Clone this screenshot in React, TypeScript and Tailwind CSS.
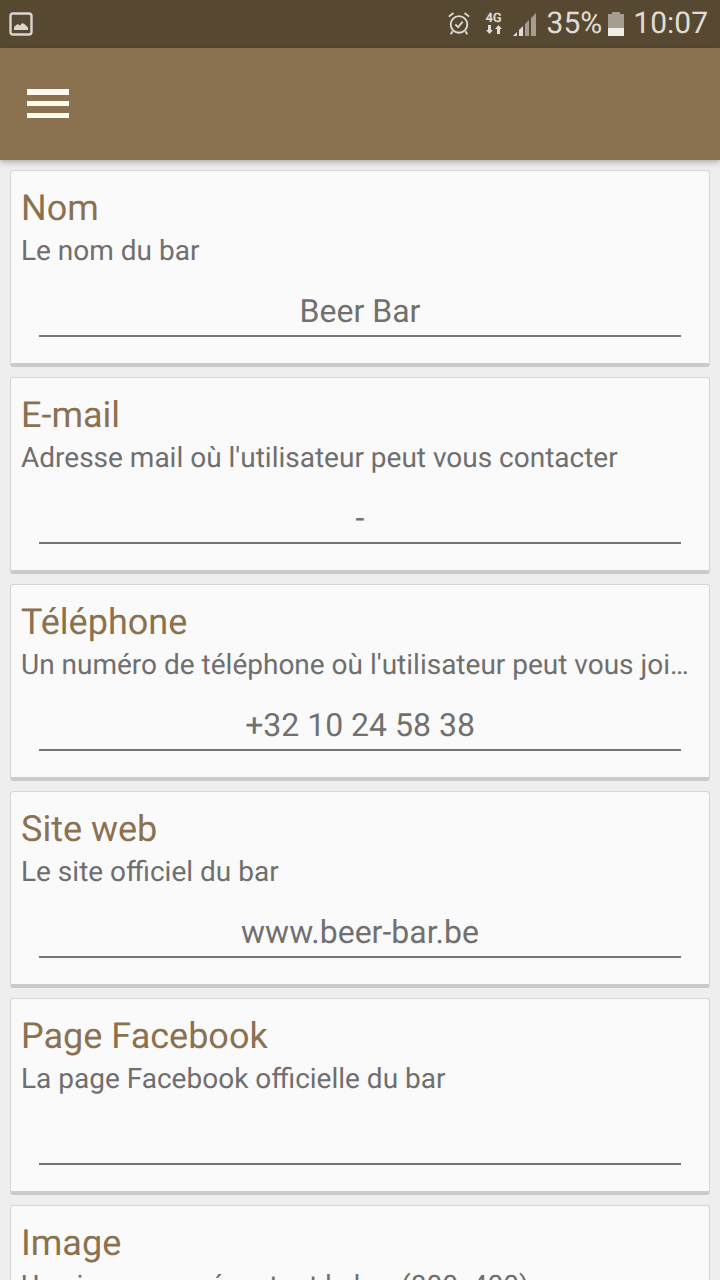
const fields = [
  { title: "Nom", hint: "Le nom du bar", value: "Beer Bar" },
  { title: "E-mail", hint: "Adresse mail où l'utilisateur peut vous contacter", value: "-" },
  { title: "Téléphone", hint: "Un numéro de téléphone où l'utilisateur peut vous joindre", value: "+32 10 24 58 38" },
  { title: "Site web", hint: "Le site officiel du bar", value: "www.beer-bar.be" },
  { title: "Page Facebook", hint: "La page Facebook officielle du bar", value: "" },
];

function StatusBar() {
  return (
    <div className="flex h-12 shrink-0 items-center justify-between bg-[#574832] pl-[9px] pr-[12px] text-[#e0dcd5]">
      <svg width="24" height="24" viewBox="0 0 24 24" fill="none">
        <rect x="1.5" y="1.5" width="21" height="21" rx="2.5" stroke="#d9d5cf" strokeWidth="2.4" />
        <path d="M5 18v-3l3.5-3 2.5 1.5 2.5-2.5 2.5 1.5 3 3v2.5z" fill="#d9d5cf" />
      </svg>
      <div className="flex items-center">
        <svg width="24" height="26" viewBox="0 0 26 28" fill="none" stroke="#e0dcd5" strokeWidth="2" className="mr-[13px]">
          <circle cx="13" cy="14.5" r="9" />
          <path d="M9 14.5l3 3 5-6" />
          <path d="M2 6l5-4M24 6l-5-4M6 22l-2 3M20 22l2 3" />
        </svg>
        <div className="mr-[9px] flex w-[20px] flex-col items-center text-[13px] font-bold leading-[12px]">
          <span>4G</span>
          <svg width="18" height="10" viewBox="0 0 18 10" fill="#e0dcd5">
            <path d="M3 0h3v5h2l-3.5 4L1 5h2zM12 9h3V4h2l-3.5-4L10 4h2z" />
          </svg>
        </div>
        <svg width="24" height="24" viewBox="0 0 24 24" className="mr-[10px]">
          <path d="M0 24h4v-4zM6 24h4v-10l-4 4z" fill="#e0dcd5" />
          <path d="M12 24h4V8l-4 4zM18 24h5V1l-5 5z" fill="#a59d8f" />
        </svg>
        <span className="mr-[6px] text-[30px] leading-none">35%</span>
        <div className="mr-[9px] flex h-[24px] w-[16px] flex-col">
          <div className="mx-auto h-[2px] w-[8px] bg-[#a59d8f]" />
          <div className="flex-1 bg-[#a59d8f]" />
          <div className="h-[8px] bg-[#f0ede8]" />
        </div>
        <span className="text-[30px] leading-none">10:07</span>
      </div>
    </div>
  );
}

function FieldCard({ title, hint, value }: { title: string; hint: string; value: string }) {
  return (
    <div className="h-[197px] shrink-0 rounded-[3px] border border-[#d6d6d6] border-b-4 border-b-[#cbcbcb] bg-[#fafafa] px-[10px] pt-[16px]">
      <div className="text-[36px] leading-[42px] text-[#8a7150]">{title}</div>
      <div className="mt-[5px] truncate pr-[8px] text-[28px] leading-[34px] text-[#6f6f6f]">{hint}</div>
      <div className="mx-[18px] mt-[20px] h-[49px] border-b-2 border-[#757575] text-center text-[32px] leading-[46px] text-[#707070]">
        {value}
      </div>
    </div>
  );
}

export default function App() {
  return (
    <div className="flex h-[1280px] w-[720px] flex-col overflow-hidden bg-[#eeeeee] font-['Roboto',sans-serif] [text-rendering:geometricPrecision]">
      <StatusBar />
      <div className="z-10 flex h-[112px] shrink-0 items-center bg-[#8a7150] pl-[27px] shadow-[0_2px_6px_rgba(0,0,0,0.3)]">
        <svg width="42" height="30" viewBox="0 0 42 30" fill="#fffaf0">
          <rect y="0" width="42" height="6" />
          <rect y="12" width="42" height="5" />
          <rect y="24" width="42" height="5" />
        </svg>
      </div>
      <div className="flex flex-col gap-[10px] px-[10px] pt-[10px]">
        {fields.map((f) => (
          <FieldCard key={f.title} {...f} />
        ))}
        <FieldCard title="Image" hint="Une image représentant le bar (800x400)" value="" />
      </div>
    </div>
  );
}
